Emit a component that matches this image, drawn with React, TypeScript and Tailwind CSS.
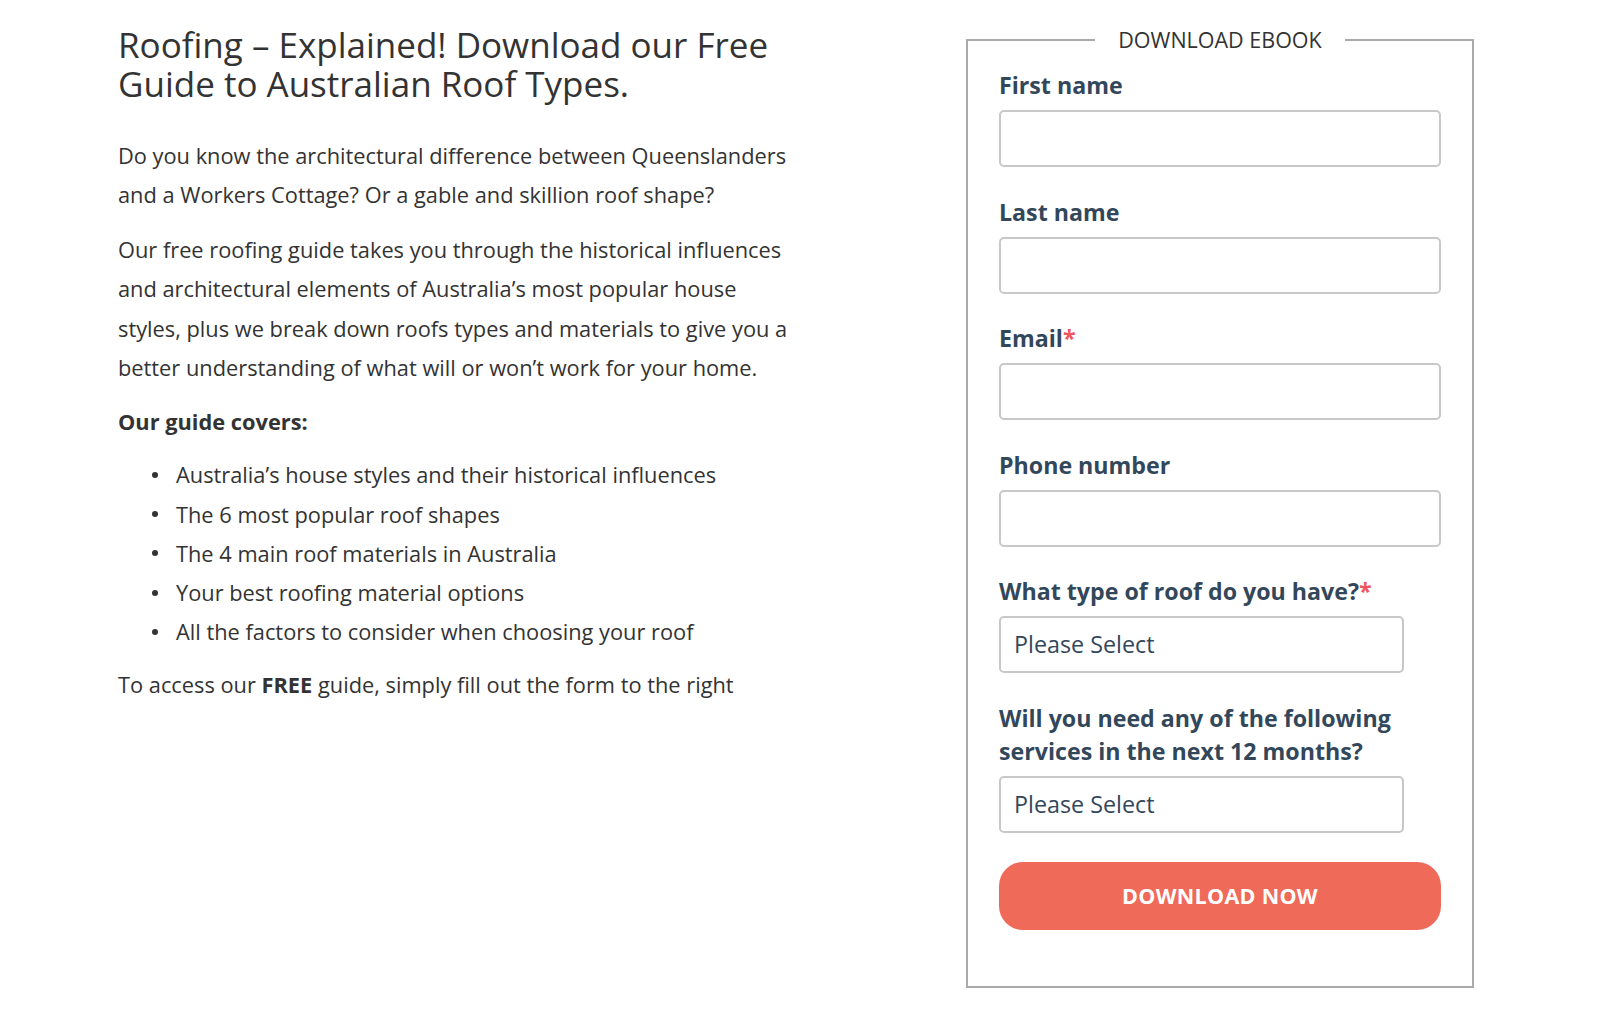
import React from "react";

const bullets = [
  "Australia\u2019s house styles and their historical influences",
  "The 6 most popular roof shapes",
  "The 4 main roof materials in Australia",
  "Your best roofing material options",
  "All the factors to consider when choosing your roof",
];

function Label({ text, required }: { text: React.ReactNode; required?: boolean }) {
  return (
    <label className="block text-[23.2px] leading-[33px] font-bold text-[#33475b] mb-2">
      {text}
      {required && <span className="text-[#f2545b]">*</span>}
    </label>
  );
}

function TextField({ label, required, first }: { label: string; required?: boolean; first?: boolean }) {
  return (
    <div className={first ? "" : "mt-[28.5px]"}>
      <Label text={label} required={required} />
      <input
        type="text"
        className="block w-full h-[57px] rounded-[5px] border-2 border-[#c8c8c8] bg-white px-[14px] text-[22px] text-[#33475b] outline-none"
      />
    </div>
  );
}

function SelectField({ label, required }: { label: React.ReactNode; required?: boolean }) {
  return (
    <div className="mt-[28.5px]">
      <Label text={label} required={required} />
      <select className="block w-[405px] h-[57px] appearance-none rounded-[5px] border-2 border-[#c8c8c8] bg-white px-[13px] text-[23.3px] text-[#33475b] outline-none">
        <option>Please Select</option>
      </select>
    </div>
  );
}

export default function App() {
  return (
    <div className="min-h-screen w-full bg-white font-['Open_Sans','Noto_Sans',sans-serif]">
      <div className="flex items-start pl-[118px] pt-[26px]">
        <div className="w-[678px] text-[#333333]">
          <h1 className="-mt-px text-[35px] leading-[39px] font-normal">
            Roofing – Explained! Download our Free Guide to Australian Roof Types.
          </h1>
          <p className="mt-[33px] text-[21.8px] leading-[39.4px]">
            Do you know the architectural difference between Queenslanders and a Workers Cottage? Or a gable and skillion roof shape?
          </p>
          <p className="mt-[15px] text-[21.8px] leading-[39.4px]">
            Our free roofing guide takes you through the historical influences and architectural elements of Australia’s most popular house styles, plus we break down roofs types and materials to give you a better understanding of what will or won’t work for your home.
          </p>
          <p className="mt-[15px] text-[21.8px] leading-[39.4px] font-bold">Our guide covers:</p>
          <ul className="mt-[13.5px]">
            {bullets.map((b) => (
              <li key={b} className="flex items-center text-[21.8px] leading-[39.2px]">
                <span className="ml-[34px] mr-[18px] h-[6px] w-[6px] rounded-full bg-[#333333] shrink-0" />
                <span>{b}</span>
              </li>
            ))}
          </ul>
          <p className="mt-[13.5px] text-[21.8px] leading-[39.4px]">
            To access our <strong className="font-bold">FREE</strong> guide, simply fill out the form to the right
          </p>
        </div>

        <fieldset className="ml-[170px] w-[508px] border-2 border-[#ababab] px-[31px] pt-[15px] pb-[56px]">
          <legend className="mx-auto px-[23px] text-[21.5px] leading-[28px] text-[#333333]">
            DOWNLOAD EBOOK
          </legend>
          <TextField label="First name" first />
          <TextField label="Last name" />
          <TextField label="Email" required />
          <TextField label="Phone number" />
          <SelectField label="What type of roof do you have?" required />
          <SelectField label={<>Will you need any of the following<br />services in the next 12 months?</>} />
          <button
            type="button"
            className="mt-[29.5px] block w-full h-[68px] rounded-[24px] bg-[#f06a5a] text-white text-[21.5px] font-bold tracking-[0.3px]"
          >
            DOWNLOAD NOW
          </button>
        </fieldset>
      </div>
    </div>
  );
}
